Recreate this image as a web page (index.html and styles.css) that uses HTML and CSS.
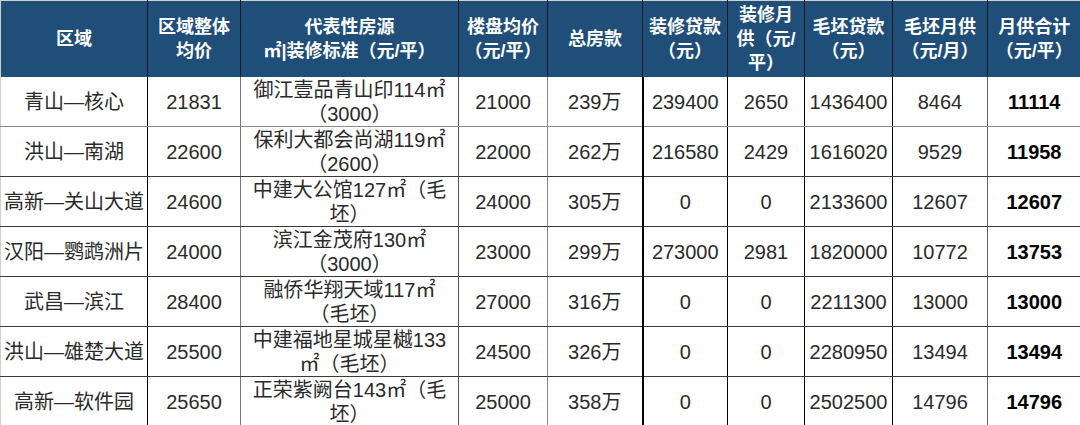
FILE: index.html
```html
<!DOCTYPE html>
<html lang="zh-CN">
<head>
<meta charset="utf-8">
<title>月供对比</title>
<link rel="stylesheet" href="styles.css">
</head>
<body>
<table class="grid">
  <colgroup>
    <col class="c1"><col class="c2"><col class="c3"><col class="c4"><col class="c5">
    <col class="c6"><col class="c7"><col class="c8"><col class="c9"><col class="c10">
  </colgroup>
  <thead>
    <tr>
      <th>区域</th>
      <th>区域整体<br>均价</th>
      <th>代表性房源<br>㎡|装修标准（元/平）</th>
      <th>楼盘均价<br>（元/平）</th>
      <th>总房款</th>
      <th>装修贷款<br>（元）</th>
      <th>装修月<br>供（元/<br>平）</th>
      <th>毛坯贷款<br>（元）</th>
      <th>毛坯月供<br>（元/月）</th>
      <th>月供合计<br>（元/平）</th>
    </tr>
  </thead>
  <tbody>
    <tr>
      <td>青山—核心</td><td class="b2">21831</td>
      <td class="b3">御江壹品青山印114㎡<br>（3000）</td>
      <td class="b4">21000</td><td class="b5">239万</td><td class="b6">239400</td>
      <td class="b7">2650</td><td class="b8">1436400</td><td class="b9">8464</td><td class="tot">11114</td>
    </tr>
    <tr>
      <td>洪山—南湖</td><td class="b2">22600</td>
      <td class="b3">保利大都会尚湖119㎡<br>（2600）</td>
      <td class="b4">22000</td><td class="b5">262万</td><td class="b6">216580</td>
      <td class="b7">2429</td><td class="b8">1616020</td><td class="b9">9529</td><td class="tot">11958</td>
    </tr>
    <tr>
      <td>高新—关山大道</td><td class="b2">24600</td>
      <td class="b3">中建大公馆127㎡（毛<br>坯）</td>
      <td class="b4">24000</td><td class="b5">305万</td><td class="b6">0</td>
      <td class="b7">0</td><td class="b8">2133600</td><td class="b9">12607</td><td class="tot">12607</td>
    </tr>
    <tr>
      <td>汉阳—鹦鹉洲片</td><td class="b2">24000</td>
      <td class="b3">滨江金茂府130㎡<br>（3000）</td>
      <td class="b4">23000</td><td class="b5">299万</td><td class="b6">273000</td>
      <td class="b7">2981</td><td class="b8">1820000</td><td class="b9">10772</td><td class="tot">13753</td>
    </tr>
    <tr>
      <td>武昌—滨江</td><td class="b2">28400</td>
      <td class="b3">融侨华翔天域117㎡<br>（毛坯）</td>
      <td class="b4">27000</td><td class="b5">316万</td><td class="b6">0</td>
      <td class="b7">0</td><td class="b8">2211300</td><td class="b9">13000</td><td class="tot">13000</td>
    </tr>
    <tr>
      <td>洪山—雄楚大道</td><td class="b2">25500</td>
      <td class="b3">中建福地星城星樾133<br>㎡（毛坯）</td>
      <td class="b4">24500</td><td class="b5">326万</td><td class="b6">0</td>
      <td class="b7">0</td><td class="b8">2280950</td><td class="b9">13494</td><td class="tot">13494</td>
    </tr>
    <tr>
      <td>高新—软件园</td><td class="b2">25650</td>
      <td class="b3">正荣紫阙台143㎡（毛<br>坯）</td>
      <td class="b4">25000</td><td class="b5">358万</td><td class="b6">0</td>
      <td class="b7">0</td><td class="b8">2502500</td><td class="b9">14796</td><td class="tot">14796</td>
    </tr>
  </tbody>
</table>
</body>
</html>
```

FILE: styles.css
```css
html, body {
  margin: 0;
  padding: 0;
  background: #ffffff;
}

.grid {
  width: 1080px;
  table-layout: fixed;
  border-collapse: collapse;
  font-family: "Liberation Sans", "Noto Sans CJK SC", sans-serif;
  border-top: 1px solid #cfcfcf;
  border-left: 1px solid #cfcfcf;
}

.c1 { width: 147px; }
.c2 { width: 93px; }
.c3 { width: 218px; }
.c4 { width: 89px; }
.c5 { width: 95px; }
.c6 { width: 85px; }
.c7 { width: 77px; }
.c8 { width: 88px; }
.c9 { width: 95px; }
.c10 { width: 93px; }

.grid th {
  height: 76px;
  padding: 0;
  background: #1f4e79;
  color: #ffffff;
  font-size: 18px;
  font-weight: bold;
  line-height: 24px;
  text-align: center;
  vertical-align: middle;
  border-left: 1px solid #101820;
  white-space: nowrap;
}

.grid th:first-child { border-left: none; }

.grid td {
  height: 49px;
  padding: 0;
  font-size: 20px;
  line-height: 24px;
  color: #2a2a2a;
  text-align: center;
  vertical-align: middle;
  white-space: nowrap;
  border-bottom: 1px solid #3a3a3a;
  border-left: 1px solid #6e6e6e;
}

.grid td:first-child { border-left: none; }

.grid tbody tr:first-child td { border-bottom-color: #8a8a8a; }

.grid td.b2 { border-left-color: #000000; }
.grid td.b3 { border-left-color: #777777; }
.grid td.b4 { border-left-color: #555555; }
.grid td.b5 { border-left-color: #8a8a8a; }
.grid td.b6 { border-left: 2px solid #000000; }
.grid td.b7 { border-left-color: #000000; }
.grid td.b8 { border-left-color: #000000; }
.grid td.b9 { border-left-color: #000000; }

.grid td.tot {
  border-left-color: #666666;
  font-weight: bold;
  color: #000000;
}

.grid tbody tr:last-child td { border-bottom: 2px solid #000000; }
```
